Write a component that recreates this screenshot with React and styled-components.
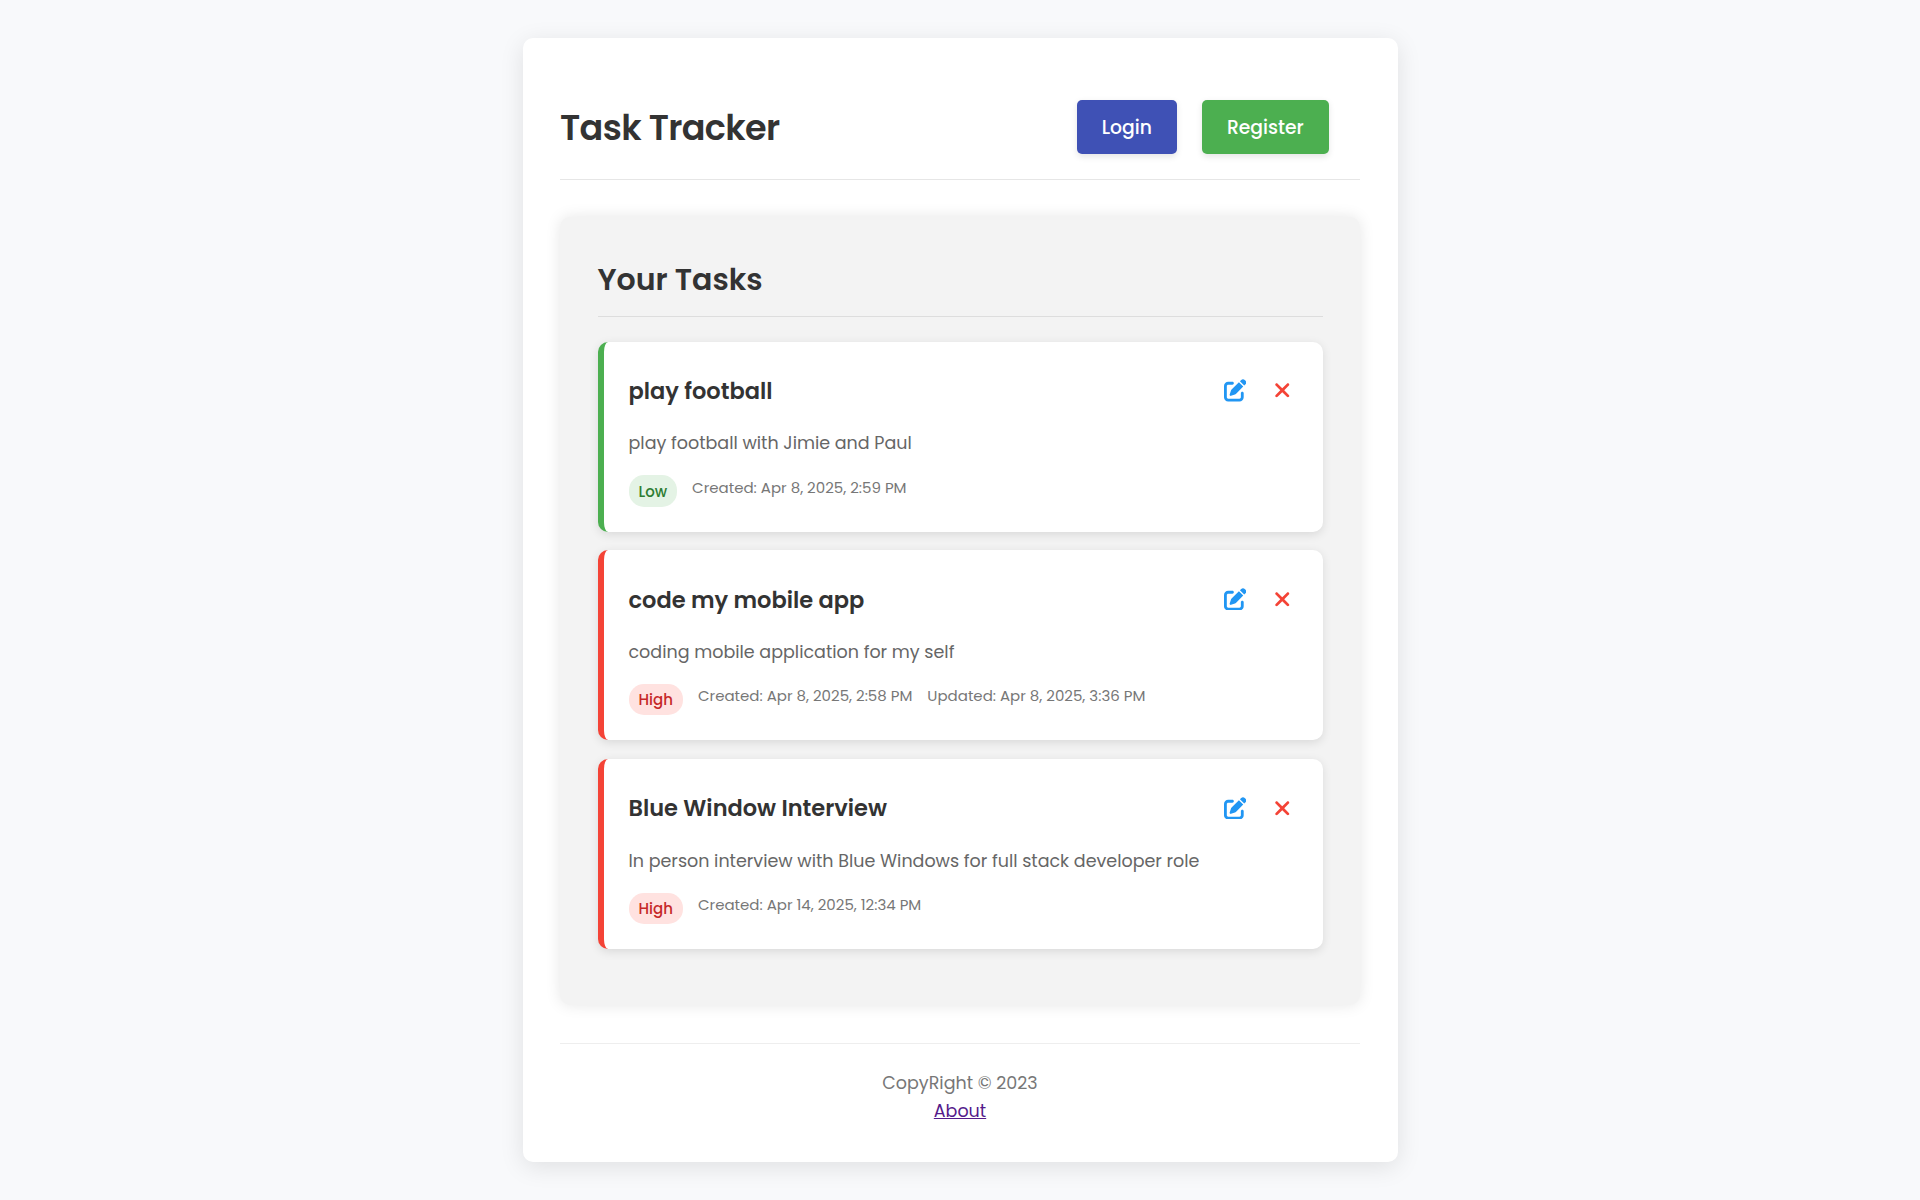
import React from "react";
import styled, { createGlobalStyle } from "styled-components";
import { FaPenToSquare, FaXmark } from "react-icons/fa6";

const GlobalStyle = createGlobalStyle`
  *, *::before, *::after { box-sizing: border-box; }
  body {
    margin: 0;
    min-height: 100vh;
    background: #f8f9fb;
    color: #333;
    font-family: Poppins, Inter, sans-serif;
  }
  h1, h2, h3, p { margin: 0; }
`;

const Page = styled.div`
  display: flex;
  justify-content: center;
  padding: 37.5px 0;
`;

const Container = styled.div`
  width: 875px;
  height: 1124px;
  padding: 37.5px;
  border-radius: 10px;
  background: #fff;
  box-shadow: 0 5px 25px rgba(0, 0, 0, 0.1);
`;

const Header = styled.header`
  display: flex;
  align-items: center;
  justify-content: space-between;
  height: 105px;
  padding-right: 31.25px;
  border-bottom: 1px solid #e6e6e6;
`;

const AppTitle = styled.h1`
  padding-top: 1px;
  font-size: 35px;
  font-weight: 600;
  line-height: 50px;
  letter-spacing: -0.625px;
`;

const Actions = styled.div`
  display: flex;
  gap: 25px;
`;

const Button = styled.button`
  height: 54px;
  padding: 0 25px;
  border: 0;
  border-radius: 5px;
  background: ${(p) => p.$color};
  color: #fff;
  font: inherit;
  font-size: 18.75px;
  font-weight: 500;
  box-shadow: 0 2.5px 6px rgba(0, 0, 0, 0.1);
`;

const Panel = styled.section`
  height: 788px;
  margin-top: 37px;
  padding: 37px 37.5px 0;
  border-radius: 10px;
  background: #f3f3f3;
  box-shadow: 0 0 15px rgba(0, 0, 0, 0.1);
`;

const PanelTitle = styled.h2`
  margin-bottom: 24.75px;
  padding: 1px 0 11px;
  border-bottom: 1px solid #ddd;
  font-size: 30px;
  font-weight: 600;
  line-height: 50px;
`;

const TaskList = styled.div`
  display: flex;
  flex-direction: column;
  gap: 18.75px;
`;

const Card = styled.article`
  height: 189.95px;
  padding: 25px 29.2px 25px 25px;
  border-left: 6px solid ${(p) => p.$accent};
  border-radius: 10px;
  background: #fff;
  box-shadow: 0 2.5px 10px rgba(0, 0, 0, 0.1);
`;

const CardHead = styled.div`
  display: flex;
  align-items: center;
  justify-content: space-between;
  height: 48.2px;
`;

const TaskTitle = styled.h3`
  font-size: 22.5px;
  font-weight: 600;
  line-height: 36px;
`;

const CardTools = styled.div`
  display: flex;
  gap: 24.5px;
  padding-bottom: 0.7px;
`;

const ToolButton = styled.button`
  display: flex;
  padding: 0;
  border: 0;
  background: none;
  color: ${(p) => p.$color};
  font-size: 22.5px;
`;

const Description = styled.p`
  margin-top: 14.2px;
  color: #666;
  font-size: 17.5px;
  line-height: 28px;
`;

const Meta = styled.div`
  display: flex;
  align-items: flex-start;
  gap: 15px;
  margin-top: 18px;
`;

const Badge = styled.span`
  height: 31.5px;
  padding: 0.45px 10px 0;
  border-radius: 15px;
  background: ${(p) => p.$bg};
  color: ${(p) => p.$color};
  font-size: 15px;
  font-weight: 500;
  line-height: 32.8px;
`;

const Stamp = styled.span`
  padding-top: 0.45px;
  color: #777;
  font-size: 15px;
  line-height: 24.8px;
`;

const Footer = styled.footer`
  display: flex;
  flex-direction: column;
  align-items: center;
  margin-top: 38px;
  padding-top: 25px;
  border-top: 1px solid #eee;
  color: #777;
  font-size: 17.5px;
  line-height: 28px;
`;

const AboutLink = styled.a`
  color: #551a8b;
  text-decoration: underline;
`;

const PRIORITY = {
  Low: { accent: "#4caf50", bg: "#e4f3e5", color: "#2e7d32" },
  High: { accent: "#f44336", bg: "#ffe2e0", color: "#c62828" },
};

const TASKS = [
  {
    title: "play football",
    text: "play football with Jimie and Paul",
    priority: "Low",
    stamps: ["Created: Apr 8, 2025, 2:59 PM"],
  },
  {
    title: "code my mobile app",
    text: "coding mobile application for my self",
    priority: "High",
    stamps: ["Created: Apr 8, 2025, 2:58 PM", "Updated: Apr 8, 2025, 3:36 PM"],
  },
  {
    title: "Blue Window Interview",
    text: "In person interview with Blue Windows for full stack developer role",
    priority: "High",
    stamps: ["Created: Apr 14, 2025, 12:34 PM"],
  },
];

function Task({ task }) {
  const p = PRIORITY[task.priority];
  return (
    <Card $accent={p.accent}>
      <CardHead>
        <TaskTitle>{task.title}</TaskTitle>
        <CardTools>
          <ToolButton $color="#2196f3" aria-label="Edit">
            <FaPenToSquare />
          </ToolButton>
          <ToolButton $color="#f44336" aria-label="Delete">
            <FaXmark />
          </ToolButton>
        </CardTools>
      </CardHead>
      <Description>{task.text}</Description>
      <Meta>
        <Badge $bg={p.bg} $color={p.color}>{task.priority}</Badge>
        {task.stamps.map((label) => (
          <Stamp key={label}>{label}</Stamp>
        ))}
      </Meta>
    </Card>
  );
}

export default function App() {
  return (
    <>
      <GlobalStyle />
      <Page>
        <Container>
          <Header>
            <AppTitle>Task Tracker</AppTitle>
            <Actions>
              <Button $color="#3f51b5">Login</Button>
              <Button $color="#4caf50">Register</Button>
            </Actions>
          </Header>
          <Panel>
            <PanelTitle>Your Tasks</PanelTitle>
            <TaskList>
              {TASKS.map((task) => (
                <Task key={task.title} task={task} />
              ))}
            </TaskList>
          </Panel>
          <Footer>
            <span>CopyRight © 2023</span>
            <AboutLink href="#about">About</AboutLink>
          </Footer>
        </Container>
      </Page>
    </>
  );
}
